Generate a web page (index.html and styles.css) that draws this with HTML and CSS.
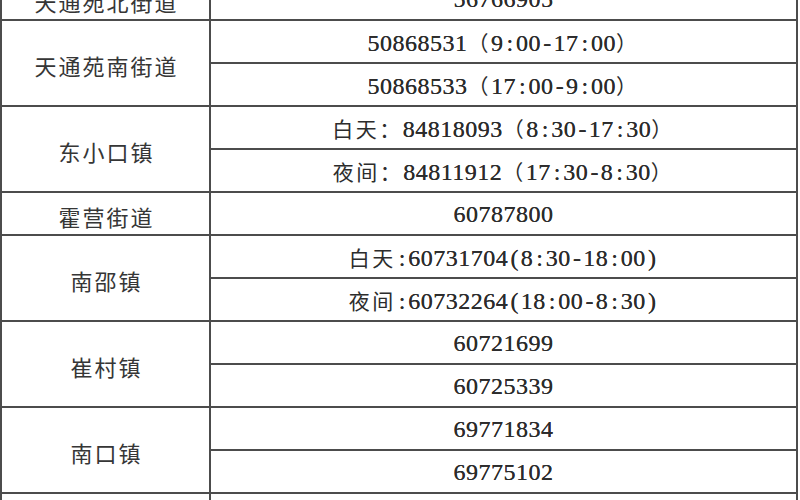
FILE: index.html
```html
<!DOCTYPE html>
<html lang="zh-CN">
<head>
<meta charset="utf-8">
<title>街道乡镇值班电话</title>
<link rel="stylesheet" href="styles.css">
</head>
<body>
<div class="page">
<table class="tbl">
<colgroup><col class="c1"><col class="c2"></colgroup>
<tr><td class="name">天通苑北街道</td><td class="tel"><span class="n">56766905</span></td></tr>
<tr><td class="name" rowspan="2">天通苑南街道</td><td class="tel"><span class="n">50868531</span><span class="cj">（</span><span class="n">9<span class="h">:</span>00<span class="h">-</span>17<span class="h">:</span>00</span><span class="cj">）</span></td></tr>
<tr><td class="tel"><span class="n">50868533</span><span class="cj">（</span><span class="n">17<span class="h">:</span>00<span class="h">-</span>9<span class="h">:</span>00</span><span class="cj">）</span></td></tr>
<tr><td class="name" rowspan="2">东小口镇</td><td class="tel"><span class="cj">白天：</span><span class="n">84818093</span><span class="cj">（</span><span class="n">8<span class="h">:</span>30<span class="h">-</span>17<span class="h">:</span>30</span><span class="cj">）</span></td></tr>
<tr><td class="tel"><span class="cj">夜间：</span><span class="n">84811912</span><span class="cj">（</span><span class="n">17<span class="h">:</span>30<span class="h">-</span>8<span class="h">:</span>30</span><span class="cj">）</span></td></tr>
<tr><td class="name">霍营街道</td><td class="tel"><span class="n">60787800</span></td></tr>
<tr><td class="name" rowspan="2">南邵镇</td><td class="tel"><span class="cj">白天</span><span class="n"><span class="h">:</span>60731704<span class="h">(</span>8<span class="h">:</span>30<span class="h">-</span>18<span class="h">:</span>00<span class="h">)</span></span></td></tr>
<tr><td class="tel"><span class="cj">夜间</span><span class="n"><span class="h">:</span>60732264<span class="h">(</span>18<span class="h">:</span>00<span class="h">-</span>8<span class="h">:</span>30<span class="h">)</span></span></td></tr>
<tr><td class="name" rowspan="2">崔村镇</td><td class="tel"><span class="n">60721699</span></td></tr>
<tr><td class="tel"><span class="n">60725339</span></td></tr>
<tr><td class="name" rowspan="2">南口镇</td><td class="tel"><span class="n">69771834</span></td></tr>
<tr><td class="tel"><span class="n">69775102</span></td></tr>
<tr><td class="name"></td><td class="tel"></td></tr>
</table>
</div>
</body>
</html>
```

FILE: styles.css
```css
html, body {
  margin: 0;
  padding: 0;
  background: #ffffff;
}

.page {
  width: 800px;
  height: 500px;
  overflow: hidden;
}

.tbl {
  margin-top: -24px;
  width: 798px;
  table-layout: fixed;
  border-collapse: collapse;
  border: 2px solid #4c4c4c;
  color: #2c2c2c;
}

.c1 { width: 209px; }
.c2 { width: auto; }

.tbl tr { height: 43px; }

.tbl td {
  border: 2px solid #4c4c4c;
  padding: 4px 0 0 0;
  text-align: center;
  vertical-align: middle;
  line-height: 26px;
  white-space: nowrap;
}

.name {
  font-family: "Noto Sans CJK SC", sans-serif;
  font-size: 22px;
  letter-spacing: 2px;
  text-indent: 2px;
  color: #363636;
}

.cj {
  font-family: "Noto Sans CJK SC", sans-serif;
  font-size: 21px;
  letter-spacing: 2.5px;
}

.n {
  font-family: "Liberation Serif", "Noto Sans CJK SC", serif;
  font-size: 24px;
  letter-spacing: 0.5px;
  text-shadow: 0 0 0.6px #2c2c2c;
}

.h {
  display: inline-block;
  width: 12.5px;
  text-align: center;
  letter-spacing: 0;
}
```
